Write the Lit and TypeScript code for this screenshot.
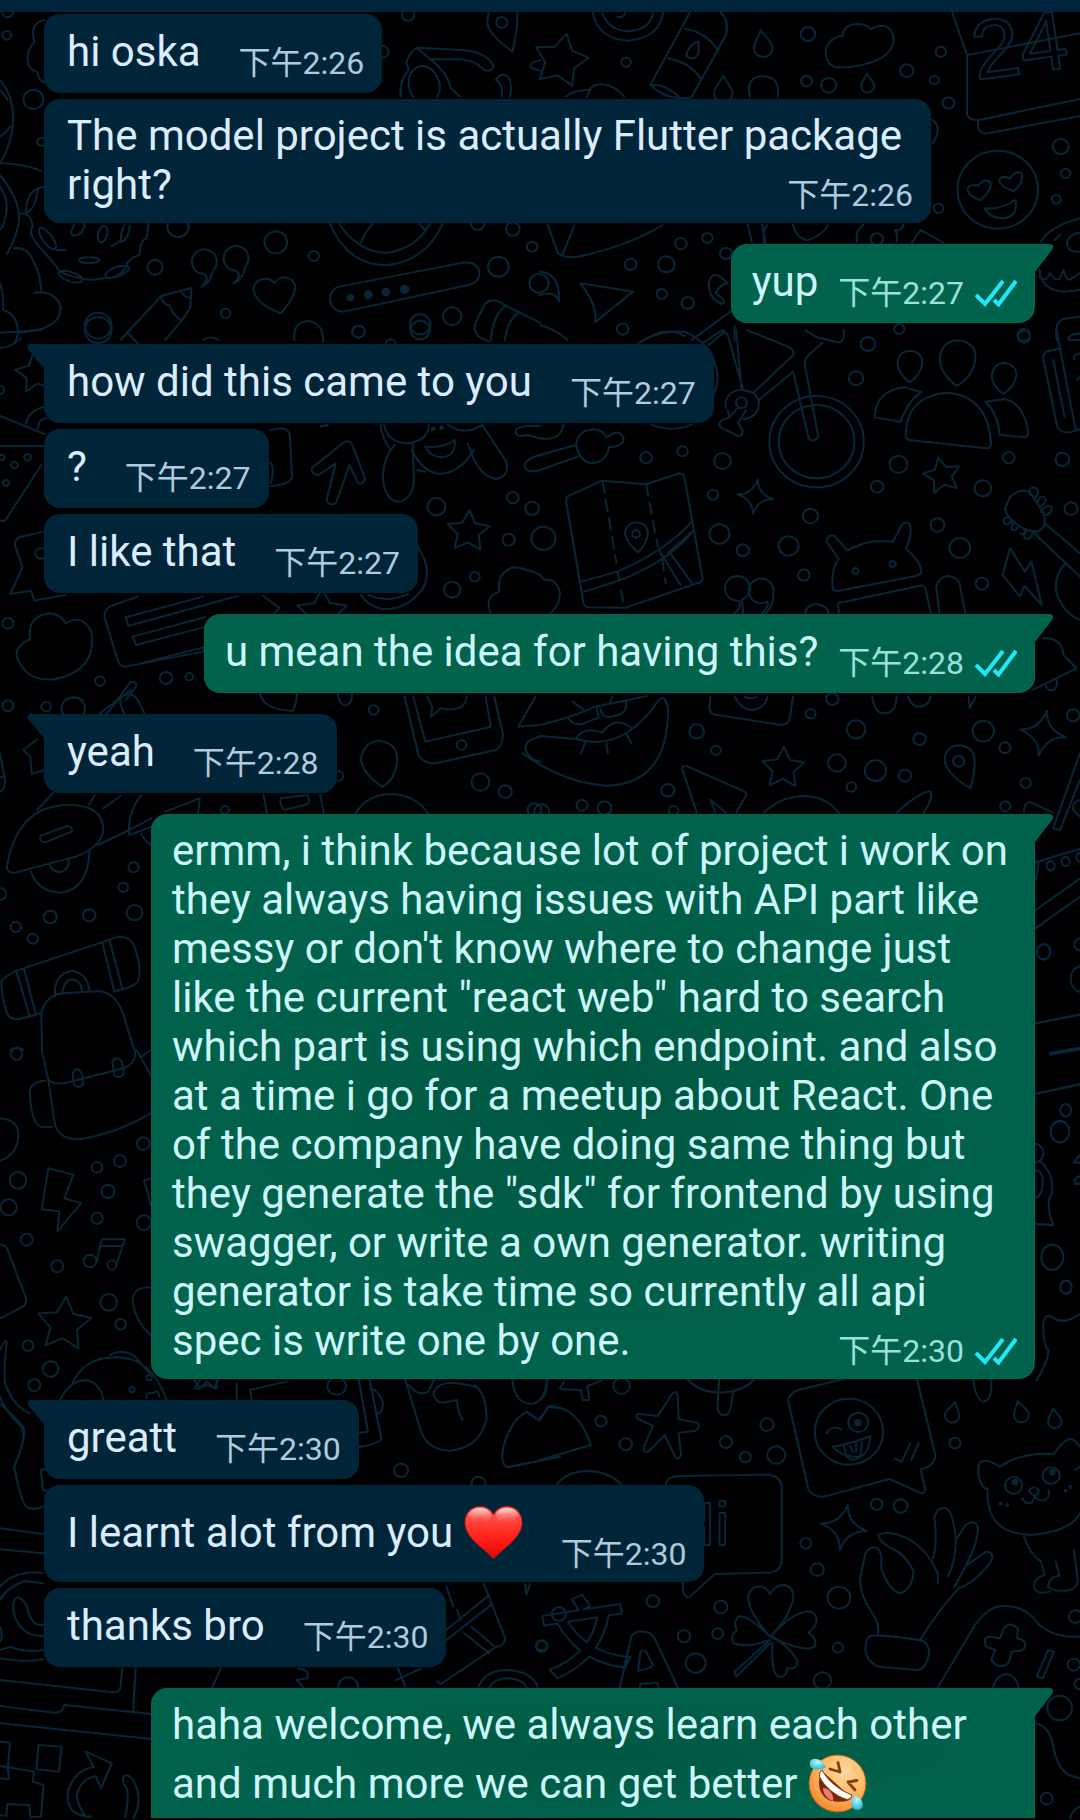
import { LitElement, html, css, svg, nothing } from "lit";
import { customElement, property } from "lit/decorators.js";
import { classMap } from "lit/directives/class-map.js";

type Emoji = "heart" | "rofl";

interface Message {
  text: string;
  time?: string;
  out?: boolean;
  tail?: boolean;
  long?: boolean;
  cut?: boolean;
  emoji?: Emoji;
}

const messages: Message[] = [
  { text: "hi oska", time: "下午2:26" },
  { text: "The model project is actually Flutter package right?", time: "下午2:26", long: true },
  { text: "yup", time: "下午2:27", out: true, tail: true },
  { text: "how did this came to you", time: "下午2:27", tail: true },
  { text: "?", time: "下午2:27" },
  { text: "I like that", time: "下午2:27" },
  { text: "u mean the idea for having this?", time: "下午2:28", out: true, tail: true },
  { text: "yeah", time: "下午2:28", tail: true },
  {
    text: "ermm, i think because lot of project i work on they always having issues with API part like messy or don't know where to change just like the current \"react web\" hard to search which part is using which endpoint. and also at a time i go for a meetup about React. One of the company have doing same thing but they generate the \"sdk\" for frontend by using swagger, or write a own generator. writing generator is take time so currently all api spec is write one by one.",
    time: "下午2:30",
    out: true,
    tail: true,
    long: true,
  },
  { text: "greatt", time: "下午2:30", tail: true },
  { text: "I learnt alot from you", emoji: "heart", time: "下午2:30" },
  { text: "thanks bro", time: "下午2:30" },
  {
    text: "haha welcome, we always learn each other and much more we can get better",
    emoji: "rofl",
    out: true,
    tail: true,
    long: true,
    cut: true,
  },
];

const rings = (list: number[][]) =>
  list.map(([x, y, r]) => svg`<circle cx=${x} cy=${y} r=${r} />`);

const star = (x: number, y: number, r: number, turn = 0, inner = 0.5) => {
  const pts: string[] = [];
  for (let i = 0; i < 10; i++) {
    const a = ((turn - 90 + i * 36) * Math.PI) / 180;
    const d = i % 2 ? r * inner : r;
    pts.push(`${(x + d * Math.cos(a)).toFixed(1)},${(y + d * Math.sin(a)).toFixed(1)}`);
  }
  return svg`<polygon points=${pts.join(" ")} />`;
};

const spark = (x: number, y: number, r: number, turn = 0) => svg`
  <path transform="translate(${x} ${y}) rotate(${turn}) scale(${r / 10})" vector-effect="non-scaling-stroke"
    d="M0-10Q1-2 10 0Q2 1 0 10Q-1 2-10 0Q-2-1 0-10Z" stroke-width="2" />`;

const drop = (x: number, y: number, r: number, turn = 0) => svg`
  <path transform="translate(${x} ${y}) rotate(${turn}) scale(${r / 10})" vector-effect="non-scaling-stroke"
    d="M0-15C3-8 9-3 9 3A9 9 0 0 1-9 3C-9-3-3-8 0-15Z" stroke-width="2" />`;

@customElement("chat-wallpaper")
export class ChatWallpaper extends LitElement {
  static styles = css`
    :host {
      display: block;
    }
    .art {
      display: block;
      width: 100%;
      height: 100%;
      fill: none;
      stroke: #082635;
      stroke-width: 6;
      stroke-linecap: round;
      stroke-linejoin: round;
    }
    .glyph {
      font-family: "Liberation Sans", "Noto Sans CJK TC", sans-serif;
    }
    .solid {
      fill: #082635;
    }
  `;

  render() {
    return html`<svg class="art" viewBox="0 0 1080 1820" preserveAspectRatio="xMidYMin slice" aria-hidden="true">
      <g transform="scale(.3444 .3333)">
        ${rings([[20, 106, 13], [97, 298, 29], [517, 680, 31], [450, 802, 22], [801, 727, 33], [911, 768, 15], [285, 977, 39], [655, 940, 14], [1041, 995, 18], [1220, 973, 30], [1313, 949, 27], [1447, 800, 30], [1489, 687, 20], [1545, 740, 15], [1565, 850, 28], [1387, 670, 20], [1185, 45, 18], [1110, 155, 18], [120, 425, 12], [1457, 67, 16], [22, 36, 16]])}
        <path d="M1488 155Q1415 100 1415 66Q1415 36 1430 20M1488 155Q1505 80 1502 36" />
        <path d="M130 60Q98 65 96 95Q94 110 100 125Q78 150 80 180Q82 210 108 215Q110 240 130 248" />
        <path d="M0 240Q40 290 38 360Q36 430 0 490Q60 490 120 512M0 410Q20 395 30 380M0 270Q15 285 22 300" />
        <path d="M0 525Q50 590 55 640T20 762M0 560Q25 600 18 640T0 690M40 745Q80 740 95 780Q118 820 120 875" />
        <path d="M98 878Q160 870 176 920Q180 990 55 998M0 850Q14 890 8 930Q50 940 52 998Q50 1015 42 1030" />
        <path d="M60 640Q90 640 95 680Q80 700 110 735L165 800Q170 820 215 830Q260 845 300 835Q350 835 365 800Q372 775 405 765Q408 720 425 715L432 672" />
        <path d="M75 640Q75 580 110 565L130 560M110 570Q105 620 80 638" />
        <ellipse cx="138" cy="716" rx="14" ry="38" transform="rotate(-36 138 716)" /><path d="M165 750L190 750" />
        <path d="M215 675Q200 700 212 706Q230 710 240 690Q248 680 245 672" />
        <ellipse cx="298" cy="702" rx="13" ry="25" transform="rotate(14 298 702)" /><path d="M362 676Q348 700 352 726Q372 722 377 678M350 722L325 738" />
        <ellipse cx="259" cy="781" rx="29" ry="9" /><ellipse cx="205" cy="830" rx="36" ry="14" transform="rotate(18 205 830)" /><ellipse cx="340" cy="815" rx="36" ry="14" transform="rotate(-20 340 815)" />
        <path d="M585 860Q612 835 592 822A36 37 0 1 1 618 812Q612 850 585 860ZM678 850Q705 825 685 812A36 37 0 1 1 712 800Q706 840 678 850Z" />
        <path d="M815 940Q740 910 736 868A34 34 0 0 1 797 850A32 32 0 0 1 857 858Q858 890 815 940Z" />
        <path d="M350 1020L468 888L556 864L552 925L528 962L480 1020M468 888Q470 912 492 916Q500 945 528 962M524 872Q535 892 552 894M368 996L400 1030" />
        <path d="M958 672Q1010 795 1120 796Q1235 785 1285 672M985 672Q1040 756 1120 758Q1205 750 1248 672M1048 728Q1060 695 1082 672M1218 672L1234 690" />
        <path d="M985 860L1345 788Q1390 785 1392 820Q1392 848 1360 855L1000 935Q960 935 958 895Q962 866 985 860Z" />
        <g class="solid">${rings([[1017, 893, 8], [1069, 884, 10], [1120, 876, 10], [1175, 868, 11]])}</g>
        <path d="M855 1020Q850 965 895 963Q940 970 938 1025M590 1020Q612 1005 635 1020" />
        <path d="M1390 1010Q1370 990 1384 960L1410 910Q1430 890 1465 915L1568 968M1425 1020Q1430 950 1468 916M1465 1020Q1475 960 1505 938M1390 1010L1420 1025" />
        <path d="M1180 190Q1190 150 1215 143L1340 150Q1410 155 1432 195Q1432 218 1405 210Q1380 180 1335 178L1250 178L1215 148M1250 178Q1300 220 1310 265L1335 290M1180 190L1187 210Q1155 250 1165 290M1190 225Q1215 180 1255 210Q1290 250 1270 290M1190 225Q1180 265 1200 290M1440 240Q1455 215 1475 230Q1490 260 1480 290M1440 240Q1460 250 1458 290M1568 180Q1530 190 1545 205L1568 212" />
      </g>

      <g transform="translate(540) scale(.3444 .3333)">
        ${rings([[250, 187, 14], [778, 102, 21], [774, 243, 16], [838, 256, 22], [1065, 212, 19], [1164, 155, 15], [1145, 240, 13], [1186, 309, 17], [1512, 439, 23], [1526, 520, 14], [1499, 598, 13], [1157, 625, 14], [409, 731, 17], [486, 714, 15], [367, 793, 24], [263, 793, 17], [354, 882, 15], [429, 909, 18], [240, 987, 17], [1043, 987, 15], [1405, 1005, 18], [978, 718, 18], [540, 760, 17], [1329, 569, 117]])}
        ${star(60, 182, 82, 12, 0.55)}
        <path d="M153 38Q170 118 255 122Q345 115 358 38M180 38Q200 92 255 94Q320 90 328 38M225 50Q245 55 248 38" />
        <path d="M435 38L320 255Q370 305 440 292L540 105Q550 60 525 38M420 86Q480 95 515 148M372 175Q440 190 465 235M320 255Q360 250 405 292M425 165Q430 135 460 125Q465 180 440 175Q430 175 425 165Z" />
        ${drop(647, 135, 30, -8)} ${drop(532, 272, 30, 0)} ${drop(951, 252, 21, -5)}
        <path d="M610 290Q595 230 648 228Q700 232 690 292M75 290Q100 268 145 270Q150 252 185 253Q220 260 245 290M135 292L145 270" />
        <path d="M880 107Q880 75 920 72Q950 72 960 88Q1010 60 1025 105Q1035 145 990 175Q930 205 860 202Q825 190 830 145Q845 110 880 107Z" />
        <path d="M1197 38L1240 165L1568 100M1240 165V345Q1250 362 1275 360L1568 297M1272 362V385Q1280 402 1300 400L1568 348" />
        <text class="glyph" x="1266" y="240" font-size="250" transform="rotate(-8 1266 240)">24</text>
        <path d="M1278 600Q1245 590 1241 568Q1245 550 1273 557Q1285 535 1307 545Q1315 570 1278 600ZM1375 573Q1335 560 1333 540Q1340 525 1365 535Q1380 510 1399 520Q1405 550 1375 573ZM1290 625Q1335 630 1380 600Q1390 650 1345 655Q1305 655 1290 625Z" />
        <path d="M1140 360Q1170 385 1140 430M22 674L52 760Q70 775 110 770Q250 740 355 676M65 765L100 676M603 674L615 725M645 674L655 730M735 674Q740 710 775 722Q830 700 835 674M660 676Q645 690 650 730M920 725Q915 690 940 674M1035 725Q1040 700 1030 690Q1050 695 1055 674M1080 728L1105 690L1170 728" />
        <path d="M117 850L270 875L160 967Q170 920 117 850ZM0 815Q60 820 55 905Q45 870 0 885M545 850Q500 800 490 850Q490 900 530 912Q545 905 510 880Q520 855 545 850" />
        <path d="M1455 725Q1480 680 1568 655M1568 755Q1530 760 1530 725Q1540 700 1568 698M1495 720L1510 705M1450 810Q1455 870 1520 875L1568 870M1450 830Q1470 850 1480 820Q1495 845 1510 835L1520 810Q1530 850 1545 835L1565 820" />
        <path d="M0 975Q50 990 80 1020M320 1010Q370 980 420 1008M565 980V1020M1500 1020Q1490 960 1530 955L1568 950M440 1020L560 930" />
      </g>

      <g transform="translate(0 330) scale(.3444 .3333)">
        ${rings([[285, 0, 39], [1041, 5, 18], [0, 180, 12], [42, 405, 10], [80, 382, 10], [17, 459, 9], [5, 382, 8], [1267, 530, 26], [1489, 503, 17], [1545, 535, 20], [1477, 629, 18], [1313, 779, 24], [1379, 740, 14], [23, 880, 16], [290, 1053, 14], [482, 1044, 18], [550, 1040, 11], [1220, 0, 28], [1134, 42, 14]])}
        ${star(1360, 605, 64, 3)} ${star(105, 130, 62, -8)} ${star(935, 850, 76, 0)}
        <path d="M0 55Q35 50 60 25M0 8L120 0M0 258L130 312M75 280Q85 240 130 230M110 295Q112 265 135 265M0 348H125M120 405L15 572H0" />
        <path d="M785 300Q840 285 842 320L848 440Q845 465 785 468M785 395Q800 420 785 460M930 290Q945 288 952 284M905 415L1000 335Q1020 330 1025 350L1060 445Q1055 465 1040 460L1015 405L975 520Q955 530 948 510L975 400L925 435Q905 435 905 415Z" />
        <path d="M1115 284Q1125 340 1185 340Q1245 330 1245 284M1105 284Q1110 330 1135 360M1145 345Q1110 390 1112 450Q1120 515 1160 515Q1200 505 1202 450L1198 340M1195 360Q1230 430 1280 432Q1340 425 1375 360M1300 284Q1350 320 1400 284L1470 395Q1480 440 1440 447Q1400 440 1375 385L1358 340M1235 350Q1290 355 1320 330Q1325 380 1280 382Q1250 380 1235 350ZM1212 420L1235 425M1568 288Q1500 285 1497 305Q1500 325 1530 315L1568 325M1568 375Q1515 390 1525 415Q1535 430 1568 420" />
        <g class="solid">${rings([[1258, 297, 4], [1282, 293, 4]])}</g>
        <path d="M125 605L55 622Q40 630 45 650L65 712L30 792L90 782L100 812L190 795M125 655Q100 655 102 672Q110 690 125 685" />
        <path d="M1212 650Q1260 720 1225 780Q1180 840 1110 838Q1065 825 1048 795M1070 795Q1130 820 1185 792M765 798L812 835L795 850M1425 852Q1405 800 1450 785Q1440 730 1490 712Q1530 715 1568 735" />
        <path d="M88 928Q75 860 145 850Q180 855 190 880Q240 850 265 905Q280 1000 200 1035Q130 1065 80 1030Q40 985 50 960Q65 935 88 928Z" />
        <path d="M600 925L590 965L365 1010Q345 1010 340 985L303 860Q302 835 330 825L400 800M410 1000L600 950M365 862L590 800M365 862L372 888L690 798M385 920L595 862M385 920L395 945L598 890M340 1110L380 1055Q400 1055 395 1070L365 1110M190 1110Q215 1095 240 1110" />
      </g>

      <g transform="translate(540 330) scale(.3444 .3333)">
        ${rings([[952, 42, 21], [918, 145, 21], [308, 383, 17], [414, 364, 15], [530, 393, 24], [502, 494, 15], [1041, 403, 26], [979, 470, 18], [1361, 383, 17], [1517, 388, 20], [1286, 475, 24], [1405, 20, 18], [785, 558, 22], [521, 612, 29], [589, 661, 18], [722, 648, 29], [766, 735, 17], [1154, 585, 20], [1219, 654, 30], [1283, 761, 18], [1542, 536, 19], [916, 723, 9], [1024, 702, 9], [803, 335, 137], [803, 335, 110], [279, 612, 11], [585, 218, 16], [10, 625, 35]])}
        ${star(1168, 437, 56, -12)} ${spark(625, 500, 52, 8)}
        <path d="M285 40Q340 0 420 5Q500 40 515 130Q520 170 495 210M325 284Q380 308 440 284M470 40L530 0L545 15L590 180L620 188L735 75Q740 60 720 50L600 0M570 0L585 178M620 188L635 210L735 125L780 325Q795 340 808 320L770 110Q765 90 780 75L820 38M770 0L800 20L870 38Q885 30 882 0M490 45L535 5M585 178Q530 190 540 235M635 210Q640 260 590 268M575 232L550 262L525 272Q515 290 530 295L575 318Q590 318 588 300L575 280L598 240M545 240L550 262" />
        <path d="M0 375L105 345M0 420L110 380M105 345Q110 300 155 298Q185 300 192 322L220 307Q245 310 242 330Q240 350 200 352Q195 395 150 400Q115 395 105 345M0 325Q60 335 68 284" />
        <path d="M78 500L180 452L308 463L405 430Q418 432 420 445L472 745Q470 760 455 760L250 833L140 832Q128 830 126 818L76 515ZM120 755L225 725Q370 660 440 575M128 785L230 752Q380 690 445 602M345 660L408 765M375 665L440 758M372 668L445 602M225 725L230 752" />
        <path stroke-dasharray="34 22" d="M182 455L222 700M308 463L342 650M235 780L243 820M355 690L365 760" />
        <path d="M285 668Q245 630 247 605Q255 577 280 577Q312 580 313 610Q310 640 285 668Z" />
        <path d="M1073 157Q1040 130 1038 100Q1042 62 1075 62Q1110 65 1110 100Q1105 135 1073 157ZM1210 168Q1160 130 1161 80Q1170 32 1213 31Q1262 36 1265 80Q1260 140 1210 168ZM1345 192Q1310 165 1311 135Q1320 98 1350 98Q1382 104 1384 135Q1375 175 1345 192Z" />
        <path d="M1062 322Q1060 200 1180 188Q1300 195 1310 340Q1308 356 1295 355L1070 330ZM1107 187Q1070 210 1047 275L972 262Q975 180 1060 172ZM1293 215Q1330 250 1335 315L1410 322Q1420 320 1415 290Q1400 220 1350 207Z" />
        <path d="M1500 0L1510 55L1470 65Q1458 75 1462 90L1502 290Q1512 310 1540 307L1568 297M1490 90L1523 260M1510 55L1555 298M1568 10Q1530 15 1535 30L1568 30M1568 70Q1545 75 1552 88M1568 140L1560 150" />
        <path d="M565 850Q590 825 575 812A36 37 0 1 1 585 810Q592 835 588 850M645 850Q668 825 660 815A36 37 0 1 1 678 780Q680 830 655 850M770 850Q775 822 805 822Q835 828 838 850" />
        <path d="M850 775Q845 710 868 688L832 635Q835 612 855 618L893 662Q950 625 1025 635L1050 585Q1065 570 1075 585Q1080 620 1062 655Q1105 695 1108 725Q1105 735 1090 738L865 783Q852 783 850 775ZM868 850L865 820L1110 766Q1120 770 1122 790L1135 850M1160 850L1150 770Q1160 740 1185 738Q1210 740 1218 760L1235 850M0 735L12 750Q50 745 58 790Q58 825 30 850" />
        <path d="M1365 655L1408 725L1427 695L1457 825L1407 768L1393 800L1343 735ZM1350 535L1365 500Q1400 470 1425 490L1462 550Q1475 590 1445 605Q1410 605 1380 580Q1355 560 1350 535ZM1435 610L1568 740M1465 580L1568 670M1525 700Q1490 740 1500 790Q1520 850 1568 870" />
        <path d="M1425 495Q1415 480 1430 472Q1450 475 1445 492L1435 510M1445 515Q1450 495 1465 502Q1475 515 1452 530M1455 545Q1470 520 1485 532Q1490 550 1462 558M1372 570Q1360 590 1348 580Q1340 565 1360 560M1390 585Q1385 605 1372 600Q1365 590 1378 575M1410 600Q1405 618 1393 610M1430 610Q1425 630 1408 625Q1400 610 1415 602" />
        <path d="M1460 925Q1515 920 1520 975L1558 1015L1430 1080M1468 1065Q1475 1085 1490 1080Q1505 1070 1500 1050" />
      </g>

      <g transform="translate(0 690) scale(.3444 .3333)">
        ${rings([[23, 47, 16], [134, 50, 14], [1085, 60, 14], [983, 258, 14], [1395, 276, 26], [1467, 305, 19], [388, 532, 15], [358, 592, 14], [146, 681, 19], [259, 676, 18], [391, 668, 23], [46, 711, 15], [95, 746, 15], [0, 612, 18], [1340, 165, 14], [653, 360, 12], [213, 56, 34], [1552, 360, 20]])}
        <path d="M290 70L380 0M310 70L350 20Q390 0 405 40L420 70M348 20Q350 50 360 70M755 10Q765 60 850 62Q862 40 862 10M980 10Q985 45 1003 46Q1022 44 1022 10" />
        <path d="M1110 290Q1050 250 1048 205Q1060 152 1102 152Q1155 160 1153 210Q1148 270 1110 290ZM1175 20L1215 195Q1230 222 1265 220L1440 180Q1462 165 1460 130L1435 20M1200 20L1235 155L1425 110L1410 20M1240 20L1255 50L1252 80L1280 55Q1350 70 1355 20M1568 105L1505 110L1555 20M1568 140Q1520 150 1527 180Q1535 210 1568 215M1030 375Q1060 315 1135 312Q1210 315 1242 370M765 314L775 370M930 314L940 370M815 325L892 315Q900 325 895 342L825 360Q812 350 815 325Z" />
        <path d="M108 148L68 180L88 200L92 252L130 240M0 190L15 270Q15 300 0 305M0 262L14 262" />
        <path d="M20 530Q50 345 200 345Q300 345 300 420Q295 470 220 500L45 548Q20 550 20 530ZM118 437L195 408Q212 408 208 425L130 457Q112 455 118 437ZM90 545Q110 605 175 608Q255 600 260 485M145 525Q150 545 175 546Q200 540 200 510M108 360L155 308M258 345L275 316M300 355L350 318M285 465L375 420L440 385M375 435Q370 365 410 316M375 435L440 410M480 365L580 325L575 370M410 430Q420 455 440 465" />
        <path d="M5 870L40 845L345 740Q380 740 390 770Q415 840 400 875Q390 890 330 905M5 870Q0 900 20 970Q30 990 55 988L120 970M48 845L85 975M70 838L103 970M297 757L332 905M318 750L355 895M160 920Q155 850 210 843Q255 850 260 905M180 912Q185 870 210 868Q235 872 238 900M122 1080L120 970Q130 920 180 910L290 903Q340 910 360 980L390 1080M30 1080Q50 1065 68 1080" />
      </g>

      <g transform="translate(540 600) scale(.3444 .3333)">
        ${rings([[455, 394, 21], [511, 451, 14], [371, 571, 19], [122, 616, 16], [187, 624, 20], [786, 341, 14], [849, 297, 18], [918, 388, 27], [1102, 417, 18], [1287, 393, 31], [1350, 443, 16], [862, 489, 26], [974, 512, 31], [1060, 527, 18], [904, 561, 14], [1216, 484, 16], [1410, 549, 15], [1351, 619, 15], [1548, 346, 18], [388, 632, 14], [5, 635, 22]])}
        ${star(706, 505, 64, 2)} ${spark(1460, 400, 68, 10)}
        <path d="M0 375Q100 350 160 320L310 288M0 408L105 417Q240 460 345 300Q365 280 372 330Q370 555 190 557Q60 545 -50 460M82 350Q90 375 120 373L170 352L165 325M175 325Q180 355 205 350Q255 345 250 305M95 305L130 332M210 290L203 308M105 417Q120 385 160 392L180 398Q220 345 265 385M132 428L118 462M193 430L197 460M250 400L265 430" />
        <path d="M495 290L492 325Q495 345 515 345L700 375Q722 375 726 350L735 290M565 290Q585 330 615 330Q655 325 660 290M595 290Q610 300 628 290M965 290Q970 340 1000 340Q1035 338 1035 290M1068 290Q1080 320 1100 320Q1130 318 1135 290M1245 290L1248 325L1265 290" />
        <path d="M455 638L412 505Q415 495 430 500L595 575Q602 585 595 592L570 638M540 638L495 600L510 638M650 638Q700 588 768 588Q830 590 868 638M1035 638Q1110 570 1135 575Q1140 600 1115 638M1250 565Q1175 520 1175 475Q1180 437 1216 436Q1260 440 1262 480Q1262 520 1250 565ZM1405 635Q1405 610 1420 605L1490 638M1490 685L1568 460M1490 685L1510 690L1568 540M1568 600Q1545 605 1548 630L1568 650" />
      </g>

      <g transform="translate(1020 780) scale(.3333 .3827)">
        ${rings([[92, 224, 12], [137, 213, 12], [71, 449, 20], [178, 430, 15], [137, 863, 16], [120, 919, 28], [97, 1247, 33], [138, 1325, 17], [180, 202, 11], [186, 520, 34], [46, 975, 24]])}
        <path d="M46 215L180 180M46 340L180 258M46 388L180 305M46 636L180 613M46 820L180 795M48 260L56 215M46 1020Q70 1020 68 1055Q65 1090 46 1092M60 995Q105 1030 95 1080Q75 1110 100 1163L46 1160M180 980L160 1000L180 1000M180 1035Q160 1040 165 1055L180 1055M50 1568Q85 1520 85 1490Q70 1480 70 1420Q75 1390 100 1405Q130 1425 180 1395" />
        <path stroke-width="10" d="M92 715L180 702" />
      </g>

      <g transform="translate(0 1050) scale(.3333)">
        ${rings([[50, 12, 17], [54, 391, 25], [26, 472, 24], [291, 352, 16], [360, 333, 18], [324, 424, 20], [291, 505, 17], [80, 569, 18], [172, 649, 18], [326, 757, 25], [362, 823, 16], [84, 887, 16], [152, 957, 23], [103, 1006, 18], [432, 518, 22], [430, 281, 19], [396, 1019, 8], [270, 633, 19], [336, 645, 14], [448, 983, 8]])}
        ${star(192, 823, 84, 5)}
        <path d="M125 0L145 90Q160 105 200 98L370 55Q410 40 405 0M145 90L165 225Q180 270 240 268Q350 250 452 190M135 92Q85 95 90 135Q95 230 130 232L158 230M218 70Q230 45 245 70L250 100Q240 120 222 105ZM337 35Q350 15 365 35L372 70Q360 90 343 75ZM410 0L452 75M425 20L452 0" />
        <path d="M0 205Q58 210 55 260Q50 315 0 332M145 355L220 374L193 445L243 460L172 545L178 484L125 478ZM305 568L290 635M305 568H375L348 645M300 588H368M0 583Q20 585 25 605L78 745Q80 765 65 772L0 805M452 712Q395 710 398 760Q410 820 452 855M452 385L432 392L442 425L452 465" />
        <path d="M0 900Q20 860 20 880Q10 960 15 1000Q40 1070 90 1090M0 1040Q20 1090 50 1115Q80 1140 65 1190M180 1050Q210 990 260 990Q300 1000 310 1048M215 1005Q250 920 350 922Q450 920 500 1048M330 915Q360 895 400 915L450 970M440 1045Q435 1025 458 1030Q475 1015 478 1040M710 1048V1000M755 1048L750 1020L860 995M585 1015L600 990M590 1018L620 1005L650 1015L650 992" />
      </g>

      <g transform="translate(0 1360) scale(.3571 .3333)">
        ${rings([[1123, 331, 20], [1340, 370, 20], [1518, 857, 14], [1565, 762, 20], [943, 78, 26], [975, 980, 28]])}
        <path d="M0 130Q40 170 65 200Q75 230 40 320Q60 440 80 445Q100 450 120 440M115 330L120 390L130 392M115 330L130 325M0 505L120 522M0 568L120 580M0 680Q40 630 120 638M0 720Q20 680 70 663L120 670M120 795Q95 800 80 760Q75 720 50 712Q30 720 40 765Q60 830 120 828M0 800Q10 830 0 845M0 870L30 860Q70 880 120 870M0 895Q60 910 120 898" />
        <path d="M0 960L315 997Q335 998 338 980L342 925M380 925L373 1052M0 1038L150 1058Q175 1060 180 1035L425 1062M0 1090L425 1137" />
        <path d="M0 1145L28 1148L22 1222L0 1218M108 1155L172 1160L165 1235L102 1228ZM22 1222L25 1258L0 1255M25 1222L95 1235L92 1265L122 1275L115 1370L85 1372L82 1335L20 1332L18 1368L0 1365" />
        <path d="M255 1370Q185 1370 190 1300Q205 1230 262 1222L240 1175L313 1210L283 1285L268 1248Q220 1260 215 1310Q220 1340 240 1370M345 1250Q360 1240 372 1260Q395 1300 385 1345L375 1372M345 1250Q342 1270 355 1285Q362 1320 350 1372" />
        <path d="M1005 60L1030 215L1003 218M1035 60L1068 235Q1065 250 1003 262M1038 85Q1065 95 1073 130Q1070 165 1055 160M1135 60L1175 200Q1190 270 1260 272Q1340 265 1362 180Q1365 110 1330 75M1145 75Q1170 110 1200 95L1215 60M1330 80Q1230 50 1213 100Q1220 130 1240 128L1280 120Q1280 150 1295 180M1435 60Q1440 130 1490 132Q1525 125 1532 60M1420 322Q1400 310 1410 260Q1430 180 1475 155L1510 182L1535 140L1568 145M1420 322L1568 290M1470 672L1474 705L1484 672M545 60L560 85L580 65L600 85L610 60" />
        <path d="M1355 672L1415 835Q1410 860 1390 860L1235 972L1225 965M1250 810L1370 705M1250 840L1375 735M1320 800L1385 860M1300 820L1370 880M1250 680L1270 740M1280 750L1290 780M1115 925L1135 980M1110 960L1180 925M1340 980Q1360 930 1420 930Q1490 935 1505 980M1370 982Q1385 955 1425 955Q1465 960 1475 982M618 925L595 982M835 925Q870 930 860 955L830 960L850 982" />
      </g>

      <g transform="translate(540 1300) scale(.3444 .3333)">
        ${rings([[177, 363, 16], [249, 433, 18], [237, 258, 24], [540, 426, 18], [596, 471, 16], [659, 374, 19], [686, 465, 26], [1205, 429, 16], [978, 613, 17], [1047, 618, 20], [772, 730, 16], [805, 809, 19], [868, 893, 33], [328, 904, 18], [525, 921, 19], [418, 1009, 18], [516, 1001, 16], [452, 1089, 29], [865, 1043, 15], [820, 1142, 25], [1555, 950, 19], [1550, 1094, 18], [5, 1038, 17], [897, 395, 99], [924, 367, 29], [1375, 556, 25], [1484, 527, 25], [1568, 1152, 16]])}
        <g class="solid">${rings([[923, 368, 8], [1379, 546, 7], [1488, 517, 7], [1338, 611, 3], [1356, 615, 3], [1526, 572, 3], [1540, 560, 3]])}</g>
        ${spark(882, 682, 68, 10)} ${drop(1198, 340, 23, 12)} ${drop(1396, 338, 24, -14)} ${drop(1494, 358, 22, -8)}
        <path d="M58 265L70 245M62 268L118 270L125 300L143 300L138 258L178 242M0 300Q22 285 20 240M0 355L28 318Q110 320 148 435L0 480M385 280Q398 268 400 290L403 358L455 368Q470 380 452 392L402 398L410 465Q400 485 390 465L362 405L315 455Q298 460 302 440L328 378L282 355Q275 340 292 342L342 348Z" />
        <path d="M430 240Q460 275 520 278Q590 275 620 240M520 240L515 325Q520 350 540 345Q555 345 560 275M720 300Q725 280 750 270L880 238M720 300L780 570Q795 592 825 590L1015 537L1108 580Q1120 578 1118 565L1105 508Q1145 500 1148 465L1095 240M1258 240Q1265 300 1288 305Q1315 300 1310 240" />
        <path d="M832 400Q845 375 875 388M850 440Q910 430 960 408Q955 460 930 470Q880 475 850 440M882 435L890 470Q910 490 930 470L935 425M900 438L908 455M918 430V455M1030 475L1050 485L1075 430M1078 480L1100 428" />
        <path d="M50 552Q80 513 140 513Q200 515 235 552M365 552Q370 530 400 528L665 524Q700 530 702 560V780Q700 815 665 818L508 822L435 890Q418 895 415 870V845" />
        <text class="glyph" x="375" y="734" font-size="185">Hi</text>
        <path d="M1335 500Q1400 455 1492 462M1335 500Q1290 470 1275 490Q1265 540 1295 568M1492 462Q1530 405 1550 420L1568 440M1300 565Q1290 700 1425 705Q1540 695 1568 640M1420 570Q1435 555 1448 570Q1445 585 1437 588Q1420 580 1420 570ZM1400 595Q1410 615 1428 608L1437 590Q1450 605 1465 600Q1480 595 1477 570M1405 708Q1420 760 1455 785L1465 825Q1430 835 1435 865Q1445 885 1480 875M1498 785L1508 828Q1480 825 1475 860Q1490 875 1530 872Q1568 865 1560 830L1550 750M1568 500L1555 510" />
        <path d="M982 1000Q985 970 965 940Q925 880 930 830L945 760Q960 735 980 745Q995 760 990 800Q1010 870 1045 880Q1080 870 1085 815Q1060 760 1020 745Q980 720 982 705Q1010 690 1060 712Q1120 740 1155 820V848M1140 775Q1155 740 1145 650Q1155 620 1180 625Q1200 635 1208 720Q1205 790 1185 828M1208 720L1235 675Q1265 655 1272 685Q1270 730 1240 790Q1225 820 1203 862M1240 795L1295 755Q1320 755 1310 785Q1260 850 1215 865Q1150 940 1105 1018M955 1010Q970 1000 1100 1020Q1130 1025 1130 1060Q1120 1110 1095 1110L985 1100Q950 1090 945 1050Q945 1020 955 1010Z" />
        <path d="M668 1010Q600 930 605 885Q615 855 645 860Q660 865 668 882Q680 855 712 855Q740 865 735 900Q720 960 668 1010Q740 930 785 935Q810 945 800 975Q790 990 780 998Q805 1015 798 1040Q770 1060 668 1010ZM668 1010Q600 940 575 950Q560 970 572 990Q550 1010 562 1030Q600 1045 668 1020L565 1115L570 1130L668 1030M675 1030Q670 1110 690 1130Q715 1135 718 1105Q745 1110 747 1085Q735 1050 675 1010" />
        <text class="glyph" x="20" y="1115" font-size="250" font-weight="700" transform="rotate(-9 40 1100)">文</text>
        <path d="M232 1162L265 1010Q275 992 300 995Q325 995 335 1020L400 1162M285 1108L292 1055Q302 1045 310 1060L328 1095Q325 1105 285 1112M290 1162L292 1152L340 1148L345 1162" />
        <path d="M1155 1162L1260 980Q1300 920 1340 918Q1410 915 1445 970Q1490 1015 1568 1010M1345 990Q1355 970 1372 975L1388 985L1385 1015Q1410 1020 1410 1035Q1405 1055 1390 1052L1370 1055L1362 1085Q1350 1105 1325 1095L1310 1080L1322 1050L1295 1040Q1285 1010 1305 1010L1335 1015ZM1475 1050L1492 1055L1460 1135L1443 1130ZM1315 1162Q1325 1125 1355 1122Q1385 1130 1390 1162" />
      </g>

      <g transform="translate(760 1700) scale(.3333)">
        ${rings([[860, 296, 18], [899, 24, 37]])}
        <path d="M828 70Q870 80 880 140T925 225L960 235M930 355Q940 325 960 320" />
      </g>
    </svg>`;
  }
}

@customElement("chat-emoji")
export class ChatEmoji extends LitElement {
  @property() name: Emoji = "heart";

  static styles = css`
    :host {
      display: inline-block;
      width: 59px;
      height: 59px;
      margin-top: 5px;
      vertical-align: -15px;
    }
    .art {
      display: block;
      width: 100%;
      height: 100%;
    }
  `;

  render() {
    return this.name === "heart"
      ? html`<svg class="art" viewBox="0 0 59 59" role="img" aria-label="red heart">
          <defs>
            <linearGradient id="body" x2="0" y2="1">
              <stop offset="0" stop-color="#ff6a60" />
              <stop offset=".35" stop-color="#ff3a32" />
              <stop offset=".7" stop-color="#ff1712" />
              <stop offset="1" stop-color="#d50a0a" />
            </linearGradient>
            <linearGradient id="shine" x2="0" y2="1">
              <stop offset="0" stop-color="#ffe4e2" />
              <stop offset="1" stop-color="#ff6d66" stop-opacity="0" />
            </linearGradient>
          </defs>
          <path fill="url(#body)" stroke="#c41212" d="M29.500 56C22 46 1 36 1 19.500C1 10 7.500 3.500 16 3.500C22 3.500 27 6.500 29.500 12C32 6.500 37 3.500 43 3.500C51.500 3.500 58 10 58 19.500C58 36 37 46 29.500 56Z" />
          <ellipse cx="16" cy="12.500" rx="11" ry="7.500" fill="url(#shine)" />
          <ellipse cx="43" cy="12.500" rx="11" ry="7.500" fill="url(#shine)" />
        </svg>`
      : html`<svg class="art" viewBox="0 0 59 59" role="img" aria-label="rolling on the floor laughing">
          <defs>
            <radialGradient id="face" cx=".62" cy=".3" r=".75">
              <stop offset="0" stop-color="#ffd9a0" />
              <stop offset=".55" stop-color="#fdb763" />
              <stop offset="1" stop-color="#f0872d" />
            </radialGradient>
            <radialGradient id="tear" cx=".5" cy=".3" r=".8">
              <stop offset="0" stop-color="#b9fbff" />
              <stop offset="1" stop-color="#19aecb" />
            </radialGradient>
          </defs>
          <circle cx="29.500" cy="29.500" r="28.500" fill="url(#face)" stroke="#a8601c" />
          <path fill="none" stroke="#8a3c0c" stroke-width="2.800" stroke-linecap="round" stroke-linejoin="round" d="M22 15L32 18L30 8.500M49 26.500L40 28L47 36" />
          <path fill="#7c2608" d="M14 17C8 27 11 43 22 46.500C31 49 40 48 44 44Z" />
          <path fill="#ee7d6e" d="M15 34C21 34 26 40 25 47C19 45 15 40 15 34Z" />
          <path fill="#fff" stroke="#8a3c0c" d="M14 16C20 27 31 36 44 41C44 43.500 42 45.500 39 45.500C27 42 16 32 11.500 22.500C11.500 19 12.500 17 14 16Z" />
          <path fill="url(#tear)" d="M2 7C7 2 14 6 18 13C12 17 4 16 2 12Z" />
          <path fill="url(#tear)" d="M46 41C54 44 56 49 54 54C49 58 44 55 43 50Z" />
        </svg>`;
  }
}

@customElement("chat-bubble")
export class ChatBubble extends LitElement {
  @property({ attribute: false }) message!: Message;

  static styles = css`
    :host {
      display: flex;
      flex-direction: column;
      align-items: flex-start;
    }
    .bubble {
      position: relative;
      display: grid;
      grid-template-columns: auto auto;
      column-gap: 38px;
      box-sizing: border-box;
      max-width: 887px;
      padding: 13px 18px 11px 23px;
      border-radius: 16px;
      background: #012538;
      color: #dcecff;
    }
    .out {
      align-self: flex-end;
      column-gap: 20px;
      max-width: 884px;
      padding-left: 21px;
      background: #01634c;
      color: #cdf6fb;
    }
    .long {
      grid-template-columns: auto;
      padding-top: 12px;
      padding-bottom: 9px;
    }
    .out.long {
      background: radial-gradient(closest-side, #005640, #01634c);
    }
    .tail {
      border-top-left-radius: 0;
    }
    .out.tail {
      border-top-left-radius: 16px;
      border-top-right-radius: 0;
    }
    .tail::before {
      content: "";
      position: absolute;
      top: 0;
      left: -17px;
      width: 18px;
      height: 24px;
      background: #012538;
      clip-path: path("M18 0H3Q-1 1 1 5L17 24H18Z");
    }
    .out.tail::before {
      left: auto;
      right: -19px;
      width: 20px;
      height: 28px;
      background: #01634c;
      clip-path: path("M0 0H16Q21 1 18 6L1 28H0Z");
    }
    .text {
      margin: 0;
      padding-bottom: 6px;
      font-size: 42px;
      line-height: 49px;
      overflow-wrap: break-word;
    }
    .long .text {
      grid-area: 1 / 1;
      padding-right: 8px;
      padding-bottom: 5px;
    }
    .meta {
      display: flex;
      align-items: center;
      align-self: end;
      justify-self: end;
      gap: 11px;
      color: #afcbdd;
      font-size: 32px;
      line-height: 38px;
      white-space: nowrap;
    }
    .out .meta {
      color: #9ce0db;
    }
    .long .meta {
      grid-area: 1 / 1;
    }
    .picture {
      padding-bottom: 9px;
    }
    .picture .text {
      padding-bottom: 11px;
    }
    .picture.cut {
      padding-bottom: 5px;
      border-bottom-left-radius: 0;
      border-bottom-right-radius: 0;
    }
    .picture.cut .text {
      padding-bottom: 0;
    }
    .ticks {
      display: block;
      width: 42px;
      height: 28px;
      fill: none;
      stroke: #22e6fa;
      stroke-width: 4;
    }
  `;

  render() {
    const m = this.message;
    return html`<div
      class=${classMap({ bubble: true, out: !!m.out, tail: !!m.tail, long: !!m.long, cut: !!m.cut, picture: !!m.emoji })}
    >
      <p class="text">${m.text}${m.emoji ? html` <chat-emoji .name=${m.emoji}></chat-emoji>` : nothing}</p>
      ${m.time
        ? html`<span class="meta"
            ><time>${m.time}</time>${m.out
              ? html`<svg class="ticks" viewBox="0 0 42 28" role="img" aria-label="read">
                  <path d="M1 16L10 25L28 2M19 21L23.500 25.500L41 2" />
                </svg>`
              : nothing}</span
          >`
        : nothing}
    </div>`;
  }
}

@customElement("app-root")
export class AppRoot extends LitElement {
  static styles = css`
    :host {
      display: block;
      position: relative;
      overflow: hidden;
      min-height: 100vh;
      background: #000003;
      font-family: Roboto, "Noto Sans CJK TC", sans-serif;
    }
    .wallpaper {
      position: absolute;
      inset: 0;
    }
    .bar {
      position: relative;
      height: 12px;
      background: #00243c;
    }
    .thread {
      position: relative;
      display: flex;
      flex-direction: column;
      gap: 6px;
      margin: 0;
      padding: 2px 45px 0 44px;
      list-style: none;
    }
    .turn {
      margin-top: 15px;
    }
  `;

  render() {
    return html`
      <chat-wallpaper class="wallpaper"></chat-wallpaper>
      <header class="bar"></header>
      <ol class="thread">
        ${messages.map(
          (m) => html`<li class=${m.tail ? "turn" : ""}><chat-bubble .message=${m}></chat-bubble></li>`
        )}
      </ol>
    `;
  }
}
